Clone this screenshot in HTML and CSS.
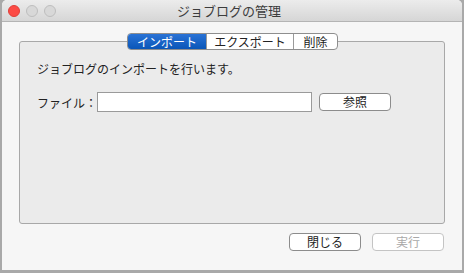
FILE: index.html
```html
<!DOCTYPE html>
<html lang="ja">
<head>
    <meta charset="UTF-8">
    <title>ジョブログの管理</title>
    <link rel="stylesheet" href="styles.css">
</head>
<body>
    <div class="window">
        <div class="titlebar">
            <div class="lights">
                <span class="light close"></span>
                <span class="light"></span>
                <span class="light"></span>
            </div>
            <div class="title">ジョブログの管理</div>
        </div>

        <div class="content">
            <div class="tabs">
                <span class="tab active">インポート</span>
                <span class="tab export">エクスポート</span>
                <span class="tab remove">削除</span>
            </div>

            <div class="group">
                <p class="desc">ジョブログのインポートを行います。</p>
                <div class="file-row">
                    <label for="file">ファイル：</label>
                    <input type="text" id="file">
                    <button class="btn">参照</button>
                </div>
            </div>

            <div class="actions">
                <button class="btn">閉じる</button>
                <button class="btn" disabled>実行</button>
            </div>
        </div>
    </div>
</body>
</html>
```

FILE: styles.css
```css
html, body {
    margin: 0;
    height: 100%;
}
body {
    background: #a9a9a9;
    font-family: "Noto Sans CJK JP", "Noto Sans", sans-serif;
    font-size: 12px;
    color: #222;
    padding: 0 2px 3px 2px;
    box-sizing: border-box;
}
.window {
    height: 100%;
    background: #f6f6f6;
    border-radius: 5px 5px 0 0;
    display: flex;
    flex-direction: column;
    overflow: hidden;
}
.titlebar {
    height: 22px;
    background: linear-gradient(#ececec, #d6d6d6);
    border-bottom: 1px solid #b4b4b4;
    box-sizing: border-box;
    display: flex;
    align-items: center;
}
.lights {
    display: flex;
    gap: 6px;
    padding-left: 6px;
    padding-top: 1px;
}
.light {
    width: 12px;
    height: 12px;
    border-radius: 50%;
    background: #d8d8d8;
    border: 1px solid #bdbdbd;
    box-sizing: border-box;
}
.light.close {
    background: #fc4b45;
    border-color: #de3f39;
}
.title {
    flex: 1;
    text-align: center;
    margin-right: 60px;
    font-size: 13px;
    color: #3c3c3c;
}
.content {
    flex: 1;
    display: flex;
    flex-direction: column;
    padding: 11px 17px 0 17px;
}
.tabs {
    display: flex;
    align-self: center;
    margin-left: 1px;
    height: 17px;
    margin-bottom: -9px;
    position: relative;
    z-index: 1;
    border: 1px solid #8e8e8e;
    border-radius: 4px;
    background: #fff;
    box-sizing: border-box;
    overflow: hidden;
}
.tab {
    width: 78px;
    text-align: center;
    line-height: 15px;
    font-size: 12px;
    color: #222;
    border-left: 1px solid #9a9a9a;
}
.tab.active {
    border-left: none;
    background: linear-gradient(#2a73d6, #0a56b8);
    color: #fff;
}
.tab.export {
    width: 86px;
}
.tab.remove {
    width: 43px;
}
.group {
    height: 183px;
    box-sizing: border-box;
    background: #ebebeb;
    border: 1px solid #a8a8a8;
    border-radius: 3px;
    padding: 19px 17px 0 17px;
}
.desc {
    margin: 0;
    line-height: 16px;
}
.file-row {
    display: flex;
    align-items: center;
    margin-top: 15px;
}
.file-row label {
    width: 60px;
}
.file-row input {
    width: 215px;
    height: 20px;
    box-sizing: border-box;
    border: 1px solid #9a9a9a;
    background: #fff;
    margin: 0 7px 0 0;
}
.btn {
    width: 72px;
    height: 18px;
    box-sizing: border-box;
    border: 1px solid #8c8c8c;
    border-radius: 4px;
    background: #fff;
    font-family: inherit;
    font-size: 12px;
    color: #222;
    padding: 0;
    line-height: 16px;
}
.btn:disabled {
    color: #a8a8a8;
    border-color: #c4c4c4;
}
.actions {
    display: flex;
    justify-content: flex-end;
    gap: 11px;
    margin-top: 9px;
    padding-right: 1px;
}
```
